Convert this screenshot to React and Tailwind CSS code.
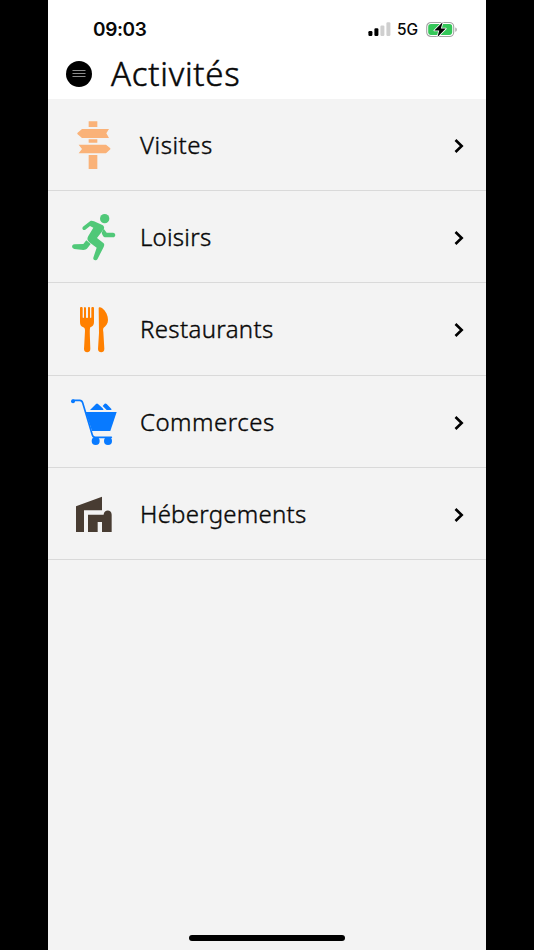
import React from 'react';

function SignpostIcon() {
  return (
    <svg viewBox="0 0 210 210" className="w-[70px] h-[70px] shrink-0" fill="#fab278">
      <path d="M86 34h26v17H86zM86 88h26v10H86zM86 135h26v42H86z" />
      <path d="M66 57H147L139 70L147 84H66L52 72V69Z" />
      <path d="M56 104H138L151 115V118L138 130H56L66 117Z" />
    </svg>
  );
}

function RunnerIcon() {
  return (
    <svg viewBox="0 6 210 210" className="w-[70px] h-[70px] shrink-0" fill="#50c878">
      <circle cx="134" cy="56" r="14" />
      <path d="M91 63C94 61 98 62 102 64L127 75C133 79 134 84 130 89L111 114L130 129C134 132 133 136 131 141L113 176C109 184 98 181 100 173L110 143L88 127C81 121 81 115 85 108L100 83L90 78L76 89C70 93 64 86 69 80Z" />
      <path d="M131 86L140 98H159C168 99 168 111 159 112H135C131 112 127 106 125 98Z" />
      <path d="M79 121L92 132L82 145C79 149 75 150 70 150L43 147C34 145 34 134 43 133L70 132Z" />
    </svg>
  );
}

function CutleryIcon() {
  return (
    <svg viewBox="0 -3 210 210" className="w-[70px] h-[70px] shrink-0" fill="#ff8000">
      <path d="M60 39C60 35 68 35 68 39V67C68 70 72 70 72 67V39C72 35 77 35 78 39V67C78 70 84 70 84 67V39C84 35 90 35 90 39V67C90 70 94 70 94 67V39C94 35 102 35 102 39V81C102 90 98 94 91 97C88 104 90 119 91 162C91 175 72 175 72 162L75 107C75 102 74 99 70 97C63 94 60 90 60 81Z" />
      <path d="M116 40C116 36 121 36 126 39C138 48 144 62 144 75C144 86 138 93 131 98C129 101 129 105 130 111L133 161C134 175 114 175 114 162L117 113Z" />
    </svg>
  );
}

function CartIcon() {
  return (
    <svg viewBox="0 0 210 210" className="w-[70px] h-[70px] shrink-0" fill="#087aff">
      <circle cx="39" cy="43" r="6" />
      <path d="M39 40H59Q66 40 68 47L97 144Q99 151 106 151H154" fill="none" stroke="#087aff" strokeWidth="5" strokeLinecap="round" />
      <path d="M77 75H170L151 132H96Z" />
      <path d="M90 69L108 51Q111 48 114 51L128 64L131 69ZM128 57L134 50Q137 48 140 51L155 67L153 69H140Z" />
      <circle cx="107" cy="162" r="12" />
      <circle cx="144" cy="162" r="12" />
    </svg>
  );
}

function LodgingIcon() {
  return (
    <svg viewBox="0 -3 210 210" className="w-[70px] h-[70px] shrink-0" fill="#483c32">
      <path d="M48 79L126 50V91H72V156H48Z" />
      <path d="M84 104H131V103C132 88 155 87 155 104V156H126V126H113V156H84Z" />
    </svg>
  );
}

function StatusBar() {
  return (
    <div className="flex h-[49px] items-start justify-between pl-[45px] pr-[28px] pt-[17px]">
      <span className="font-['Inter'] text-[19px] font-semibold leading-[25px] tracking-[-0.4px]">09:03</span>
      <div className="flex items-center h-[25px]">
        <svg width="24" height="16" viewBox="0 0 24 16" className="mr-[5px]">
          <rect x="0.4" y="9" width="4" height="5" rx="1.2" />
          <rect x="6.4" y="6.3" width="4" height="7.7" rx="1.2" />
          <rect x="12.4" y="3.5" width="4" height="10.5" rx="1.2" fill="#cfcfcf" />
          <rect x="18.4" y="0.2" width="4" height="13.8" rx="1.2" fill="#cfcfcf" />
        </svg>
        <span className="w-[22px] mr-[7px] whitespace-nowrap font-['Inter'] text-[15.5px] font-medium leading-[25px]">5G</span>
        <svg width="32" height="18" viewBox="0 0 32 18">
          <rect x="0.7" y="1.5" width="27" height="14" rx="4.3" fill="none" stroke="#a4a4a4" strokeWidth="1.1" />
          <rect x="2.2" y="3.1" width="24" height="10.8" rx="2.8" fill="#35c759" />
          <path d="M29.3 6.5C31.3 7.2 31.3 10.1 29.3 10.8Z" fill="#a4a4a4" />
          <path d="M16.6 1.3L8.3 9.5H13.2L11.5 15.9L19.8 7.6H14.9Z" stroke="#fff" strokeWidth="1.6" paintOrder="stroke" strokeLinejoin="round" />
        </svg>
      </div>
    </div>
  );
}

const categories = [
  { name: 'Visites', icon: SignpostIcon, row: 'h-[92px]', spacing: 'tracking-[0.55px]' },
  { name: 'Loisirs', icon: RunnerIcon, row: 'h-[92px]', spacing: 'tracking-[0.25px]' },
  { name: 'Restaurants', icon: CutleryIcon, row: 'h-[93px]', spacing: 'tracking-[0.35px]' },
  { name: 'Commerces', icon: CartIcon, row: 'h-[92px]', spacing: 'tracking-[0.5px]' },
  { name: 'Hébergements', icon: LodgingIcon, row: 'h-[92px]', spacing: 'tracking-[0.25px]' },
];

function CategoryRow({ category }) {
  const Icon = category.icon;
  return (
    <li className={`flex items-start border-b border-[#d9d9d9] pl-3 pr-[21px] pt-[11px] ${category.row}`}>
      <Icon />
      <span className={`ml-[10px] h-[70px] flex-1 whitespace-nowrap text-[24px] font-light leading-[70px] [-webkit-text-stroke:0.4px_#080808] ${category.spacing}`}>
        {category.name}
      </span>
      <svg width="12" height="70" viewBox="0 0 12 70" fill="none" stroke="#000" strokeWidth="2.6">
        <path d="M2.5 30L8.7 36L2.5 42" />
      </svg>
    </li>
  );
}

export default function App() {
  return (
    <div className="flex h-[950px] w-[534px] justify-center bg-black font-['Noto_Sans',sans-serif] text-[#080808]">
      <div className="flex w-[438px] flex-col bg-[#f3f3f3]">
        <header className="h-[99px] bg-white">
          <StatusBar />
          <div className="flex h-[50px] items-center pl-[18px]">
            <button aria-label="Menu" className="flex h-[26px] w-[26px] items-center justify-center rounded-full bg-black">
              <svg width="14" height="10" viewBox="0 0 14 10" stroke="#8c8c8c" strokeWidth="1">
                <path d="M0.5 1.5H13.5M0.5 4.5H13.5M0.5 7.5H13.5" />
              </svg>
            </button>
            <h1 className="ml-[19px] text-[33px] font-light leading-[50px] tracking-[0.75px] [-webkit-text-stroke:0.5px_#080808]">Activités</h1>
          </div>
        </header>
        <ul className="flex-1">
          {categories.map(c => (
            <CategoryRow key={c.name} category={c} />
          ))}
        </ul>
        <div className="mb-[9px] h-[6px] w-[156px] self-center rounded-full bg-black" />
      </div>
    </div>
  );
}
